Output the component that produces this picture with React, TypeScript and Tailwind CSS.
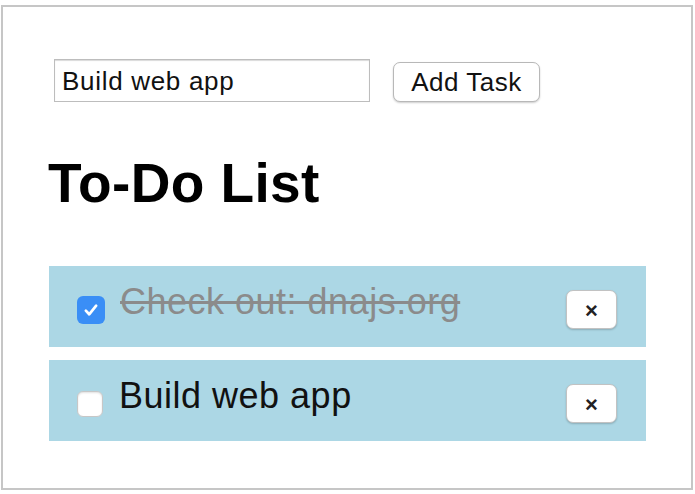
import { useState } from "react";

type Task = { id: number; title: string; done: boolean };

const initialTasks: Task[] = [
  { id: 1, title: "Check out: dnajs.org", done: true },
  { id: 2, title: "Build web app", done: false },
];

function CheckBox({ checked, onToggle }: { checked: boolean; onToggle: () => void }) {
  return (
    <button
      type="button"
      onClick={onToggle}
      className={
        checked
          ? "w-[28px] h-[28px] rounded-[6px] bg-[#3a8ef6] flex items-center justify-center shrink-0"
          : "w-[26px] h-[26px] rounded-[6px] bg-white border border-[#c7c7c7] shadow-[inset_0_1px_2px_rgba(0,0,0,0.12)] shrink-0"
      }
    >
      {checked && (
        <svg width="18" height="18" viewBox="0 0 16 16" fill="none">
          <path d="M3.4 8.6 L6.4 11.8 L12.6 4.2" stroke="white" strokeWidth="2.4" strokeLinecap="round" strokeLinejoin="round" />
        </svg>
      )}
    </button>
  );
}

export default function App() {
  const [tasks, setTasks] = useState<Task[]>(initialTasks);
  const [draft, setDraft] = useState("Build web app");

  const toggle = (id: number) =>
    setTasks((list) => list.map((t) => (t.id === id ? { ...t, done: !t.done } : t)));
  const remove = (id: number) => setTasks((list) => list.filter((t) => t.id !== id));
  const add = () => {
    if (!draft.trim()) return;
    setTasks((list) => [...list, { id: Date.now(), title: draft.trim(), done: false }]);
  };

  return (
    <div className="pt-[5px] pl-[1px] bg-white font-['Liberation_Sans',Arial,sans-serif]">
      <div className="w-[692px] h-[485px] border-2 border-[#c6c6c6] bg-white pl-[46px] pt-[52px]">
        <div className="flex items-end">
          <input
            value={draft}
            onChange={(e) => setDraft(e.target.value)}
            className="ml-[5px] w-[316px] h-[43px] border border-[#bdbdbd] shadow-[inset_0_1px_1px_rgba(0,0,0,0.15)] pl-[7px] pt-[2px] text-[26px] tracking-[0.7px] text-[#111] outline-none"
          />
          <button
            type="button"
            onClick={add}
            className="ml-[23px] w-[147px] h-[40px] rounded-[7px] border border-[#b8b8b8] bg-white shadow-[0_1px_2px_rgba(0,0,0,0.2)] text-[26px] tracking-[0.5px] text-[#111] leading-none"
          >
            Add Task
          </button>
        </div>

        <h1 className="mt-[54px] -ml-[1px] text-[55px] font-bold tracking-[0.4px] leading-none text-black">To-Do List</h1>

        <ul className="mt-[55px] w-[597px] flex flex-col gap-[13px]">
          {tasks.map((task) => (
            <li key={task.id} className="h-[81px] bg-[#acd7e5] flex items-center pt-[6px] pl-[28px] pr-[29px]">
              <CheckBox checked={task.done} onToggle={() => toggle(task.id)} />
              <span
                className={
                  task.done
                    ? "ml-[15px] pb-[15px] text-[36px] tracking-[0.5px] leading-none text-[#8b8b8b] line-through"
                    : "ml-[16px] pb-[15px] text-[36px] tracking-[0.5px] leading-none text-[#111]"
                }
              >
                {task.title}
              </span>
              <button
                type="button"
                onClick={() => remove(task.id)}
                className="ml-auto w-[51px] h-[39px] rounded-[7px] border border-[#c2c2c2] bg-white shadow-[0_1px_2px_rgba(0,0,0,0.2)] flex items-center justify-center pt-[3px] text-[22px] font-bold leading-none text-[#222]"
              >
                ×
              </button>
            </li>
          ))}
        </ul>
      </div>
    </div>
  );
}
